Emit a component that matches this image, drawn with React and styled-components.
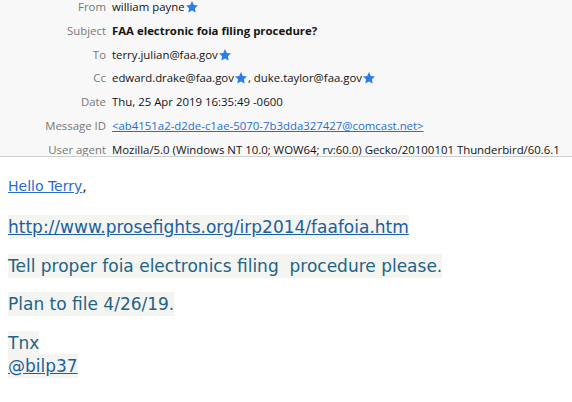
import React from 'react'
import styled, { createGlobalStyle } from 'styled-components'

const GlobalStyle = createGlobalStyle`
  html, body {
    margin: 0;
    padding: 0;
    background: #ffffff;
  }
  body {
    width: 572px;
    height: 402px;
    overflow: hidden;
  }
`

const Page = styled.div`
  width: 572px;
  height: 402px;
  overflow: hidden;
  background: #ffffff;
`

const Header = styled.div`
  background: #f8f8f8;
  border-bottom: 1px solid #cfcfcf;
  height: 156px;
  overflow: hidden;
`

const Fields = styled.div`
  display: grid;
  grid-template-columns: 106px 1fr;
  column-gap: 6px;
  row-gap: 7.8px;
  margin-top: -1px;
  font-family: "Open Sans", "Noto Sans", sans-serif;
  font-size: 11.4px;
  line-height: 16px;
`

const Label = styled.div`
  text-align: right;
  color: #777777;
  white-space: nowrap;
`

const Value = styled.div`
  color: ${p => (p.$link ? '#1f6fd1' : '#141414')};
  font-weight: ${p => (p.$bold ? 700 : 400)};
  text-decoration: ${p => (p.$link ? 'underline' : 'none')};
  white-space: nowrap;
  display: flex;
  align-items: center;
`

const Star = styled.svg`
  width: 14px;
  height: 14px;
  flex: none;
`

const Body = styled.div`
  padding: 21px 8px 0 8px;
  font-family: "DejaVu Sans", Verdana, sans-serif;
`

const Greeting = styled.div`
  font-size: 14px;
  line-height: 16px;
  color: #1a1a1a;
  margin-bottom: 22px;
`

const Para = styled.div`
  font-size: 17px;
  line-height: 23px;
  color: #1f6386;
  margin-bottom: ${p => p.$gap ?? 15.5}px;
`

const Shade = styled.span`
  background: #f4f4f0;
  padding: 2px 0;
`

const Link = styled.a`
  color: ${p => p.$light ? '#2a6bcc' : '#1c5f9e'};
  text-decoration: underline;
`

const StarIcon = () => (
  <Star viewBox="0 0 24 24">
    <path
      d="M12 1.8l3.1 6.6 7.1.9-5.2 5 1.3 7.1L12 18l-6.3 3.4 1.3-7.1-5.2-5 7.1-.9z"
      fill="#2b7de9"
    />
  </Star>
)

const fields = [
  { label: 'From', value: 'william payne', star: true },
  { label: 'Subject', value: 'FAA electronic foia filing procedure?', bold: true },
  { label: 'To', value: 'terry.julian@faa.gov', star: true },
  { label: 'Cc', value: 'cc' },
  { label: 'Date', value: 'Thu, 25 Apr 2019 16:35:49 -0600' },
  { label: 'Message ID', value: '<ab4151a2-d2de-c1ae-5070-7b3dda327427@comcast.net>', link: true },
  { label: 'User agent', value: 'Mozilla/5.0 (Windows NT 10.0; WOW64; rv:60.0) Gecko/20100101 Thunderbird/60.6.1' },
]

export default function App() {
  return (
    <Page>
      <GlobalStyle />
      <Header>
        <Fields>
          {fields.map(f => (
            <React.Fragment key={f.label}>
              <Label>{f.label}</Label>
              {f.value === 'cc' ? (
                <Value>
                  edward.drake@faa.gov<StarIcon />, duke.taylor@faa.gov<StarIcon />
                </Value>
              ) : (
                <Value $bold={f.bold} $link={f.link}>
                  {f.value}
                  {f.star && <StarIcon />}
                </Value>
              )}
            </React.Fragment>
          ))}
        </Fields>
      </Header>
      <Body>
        <Greeting>
          <Link $light href="#">Hello Terry</Link>,
        </Greeting>
        <Para>
          <Shade><Link href="#">http://www.prosefights.org/irp2014/faafoia.htm</Link></Shade>
        </Para>
        <Para>
          <Shade>Tell proper foia electronics filing&nbsp; procedure please.</Shade>
        </Para>
        <Para>
          <Shade>Plan to file 4/26/19.</Shade>
        </Para>
        <Para $gap={0}>
          <Shade>Tnx</Shade>
          <br />
          <Shade><Link href="#">@bilp37</Link></Shade>
        </Para>
      </Body>
    </Page>
  )
}
